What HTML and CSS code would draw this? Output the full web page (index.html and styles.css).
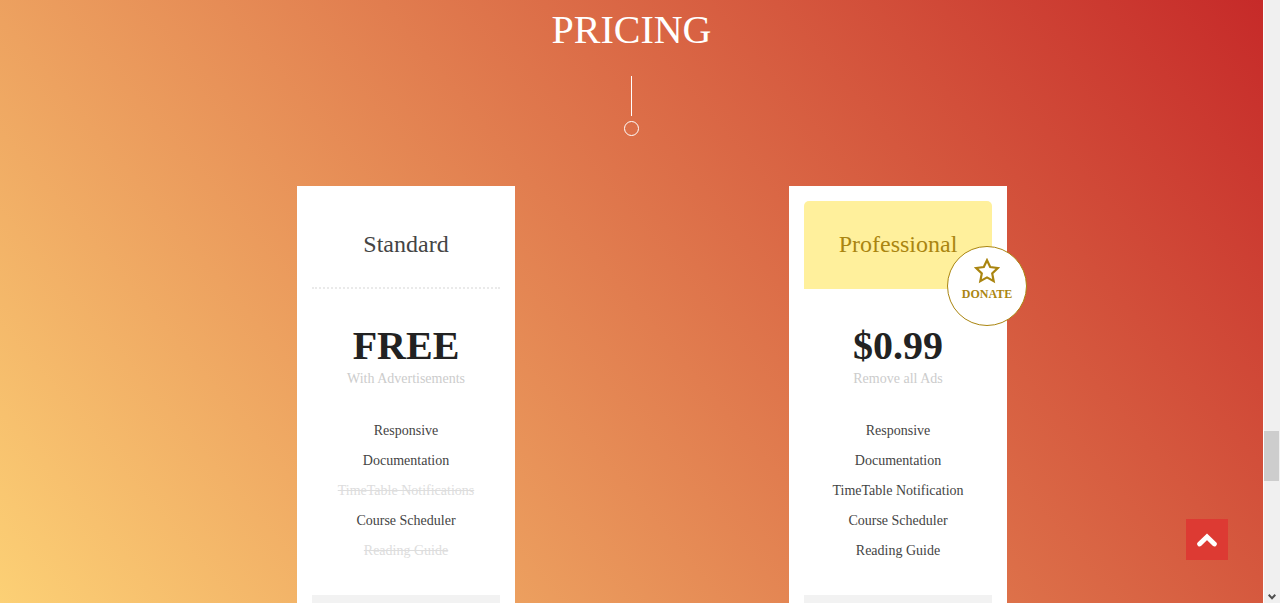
FILE: index.html
```
<!DOCTYPE html>
<html lang="en">
<head>
<meta charset="utf-8">
<title>Pricing</title>
<link rel="stylesheet" href="styles.css">
</head>
<body>
<div class="shell">
  <main class="pricing">
    <h2 class="pricing-title">PRICING</h2>
    <div class="divider"><span class="divider-line"></span><span class="divider-dot"></span></div>
    <div class="plans">
      <section class="plan">
        <h3 class="plan-name">Standard</h3>
        <p class="plan-price">FREE</p>
        <p class="plan-note">With Advertisements</p>
        <ul class="features">
          <li>Responsive</li>
          <li>Documentation</li>
          <li class="off">TimeTable Notifications</li>
          <li>Course Scheduler</li>
          <li class="off">Reading Guide</li>
        </ul>
        <div class="plan-footer"></div>
      </section>
      <section class="plan">
        <h3 class="plan-name featured">Professional</h3>
        <div class="badge">
          <svg class="badge-icon" viewBox="0 0 26 26" aria-hidden="true"><path d="M13 2.2L16.2 9L23.8 10L18.2 15.4L19.7 23.2L13 19.4L6.3 23.2L7.8 15.4L2.2 10L9.8 9Z"/></svg>
          <span>DONATE</span>
        </div>
        <p class="plan-price">$0.99</p>
        <p class="plan-note">Remove all Ads</p>
        <ul class="features">
          <li>Responsive</li>
          <li>Documentation</li>
          <li>TimeTable Notification</li>
          <li>Course Scheduler</li>
          <li>Reading Guide</li>
        </ul>
        <div class="plan-footer"></div>
      </section>
    </div>
    <button class="to-top" type="button" aria-label="Back to top">
      <svg viewBox="0 0 20 14" aria-hidden="true"><path d="M2.6 11L10 3.8L17.4 11"/></svg>
    </button>
  </main>
  <div class="scrollbar">
    <div class="scrollbar-thumb"></div>
    <svg class="scrollbar-arrow" viewBox="0 0 8 6" aria-hidden="true"><path d="M0.7 0.8L4 4.2L7.3 0.8"/></svg>
  </div>
</div>
</body>
</html>
```

FILE: styles.css
```
* {
  box-sizing: border-box;
}

body {
  margin: 0;
  font-family: "Liberation Serif", "Times New Roman", serif;
  font-size: 14px;
  line-height: 20px;
  color: #444;
}

.shell {
  display: flex;
  height: 100vh;
  overflow: hidden;
}

.pricing {
  position: relative;
  flex: 1;
  overflow: hidden;
  background: linear-gradient(50deg, #fcd075, #c62a29);
}

.pricing-title {
  margin: 0;
  padding-top: 8px;
  font-size: 40px;
  font-weight: 400;
  line-height: 44px;
  text-align: center;
  color: #fff;
}

.divider {
  display: flex;
  flex-direction: column;
  align-items: center;
  gap: 5px;
  padding: 24px 0 50px;
}

.divider-line {
  width: 1px;
  height: 40px;
  background: #fff;
}

.divider-dot {
  width: 15px;
  height: 15px;
  border: 1px solid #fff;
  border-radius: 50%;
}

.plans {
  display: flex;
  justify-content: center;
  gap: 274px;
  padding-left: 41px;
}

.plan {
  position: relative;
  width: 218px;
  padding: 15px;
  background: #fff;
  text-align: center;
}

.plan-name {
  margin: 0;
  padding: 28px 0;
  border-bottom: 2px dotted #eaeaea;
  font-size: 24px;
  font-weight: 400;
  line-height: 30px;
}

.plan-name.featured {
  padding-bottom: 30px;
  border-bottom: 0;
  border-radius: 5px 5px 0 0;
  background: #fff09c;
  color: #aa8510;
}

.plan-price {
  margin: 35px 0 0;
  font-size: 40px;
  font-weight: 700;
  line-height: 44px;
  color: #222;
}

.plan-note {
  margin: 0;
  padding-top: 1px;
  color: #ccc;
}

.features {
  margin: 0;
  padding: 27px 0 29px;
  list-style: none;
  line-height: 30px;
}

.features .off {
  color: #ddd;
  text-decoration: line-through;
}

.plan-footer {
  height: 60px;
  background: #f2f2f2;
}

.badge {
  position: absolute;
  top: 60px;
  right: -20px;
  display: flex;
  flex-direction: column;
  align-items: center;
  width: 80px;
  height: 80px;
  padding-top: 11px;
  border: 1px solid #aa8510;
  border-radius: 50%;
  background: #fff;
  font-size: 12px;
  font-weight: 700;
  line-height: 20px;
  color: #aa8510;
}

.badge-icon {
  width: 26px;
  height: 26px;
  fill: none;
  stroke: #aa8510;
  stroke-width: 2.2;
}

.to-top {
  position: absolute;
  right: 35px;
  bottom: 43px;
  display: flex;
  align-items: center;
  justify-content: center;
  width: 42px;
  height: 41px;
  padding: 0;
  border: 0;
  background: #dd3a33;
}

.to-top svg {
  width: 20px;
  height: 14px;
  fill: none;
  stroke: #fff;
  stroke-width: 4.8;
  stroke-linecap: round;
}

.scrollbar {
  display: flex;
  flex-direction: column;
  align-items: center;
  justify-content: space-between;
  width: 17px;
  padding: 431px 0 3px;
  border-left: 1px solid #fff;
  background: #f0f0f0;
}

.scrollbar-thumb {
  width: 15px;
  height: 50px;
  margin-right: 1px;
  background: #cdcdcd;
}

.scrollbar-arrow {
  width: 8px;
  height: 6px;
  margin-right: 1px;
  fill: none;
  stroke: #505050;
  stroke-width: 2;
}
```
